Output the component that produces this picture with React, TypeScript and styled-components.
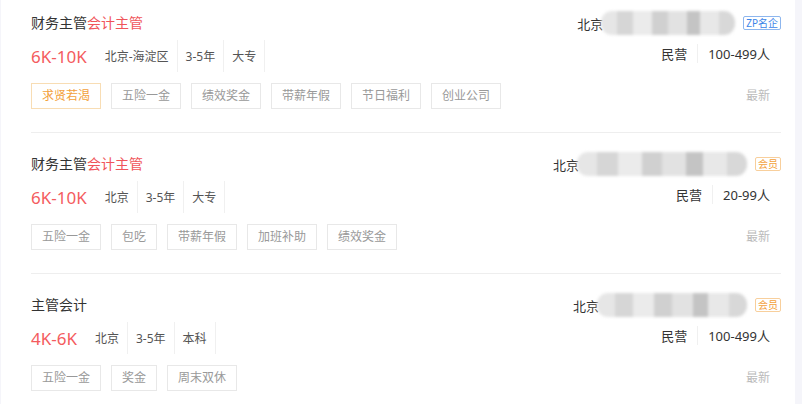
import React from "react";
import styled, { createGlobalStyle } from "styled-components";

const GlobalStyle = createGlobalStyle`
  html, body {
    margin: 0;
    padding: 0;
    background: #f5f5fa;
  }
  body {
    font-family: "Noto Sans", "Noto Sans CJK SC", sans-serif;
    color: #333;
  }
`;

const SPanel = styled.div`
  width: 794px;
  height: 404px;
  margin-left: 1px;
  background: #fff;
  padding: 0 14px 0 30px;
  box-sizing: border-box;
  overflow: hidden;
`;

const SItem = styled.div`
  display: flex;
  justify-content: space-between;
  padding: 22px 0 23px;
  border-bottom: 1px solid #eeeeee;
  &:first-child {
    padding-top: 14px;
  }
`;

const SLeft = styled.div`
  display: flex;
  flex-direction: column;
`;

const STitle = styled.div`
  font-size: 14px;
  line-height: 18px;
  color: #333;
  & em {
    font-style: normal;
    color: #f0555a;
  }
`;

const SInfoRow = styled.div`
  display: flex;
  align-items: center;
  height: 32px;
  margin-top: 8px;
`;

const SSalary = styled.span`
  font-size: 17px;
  color: #f45b5e;
  margin-right: 10px;
`;

const SInfo = styled.span`
  display: flex;
  align-items: center;
  height: 32px;
  padding: 0 8px;
  font-size: 12px;
  color: #555;
  border-right: 1px solid #f0f0f0;
`;

const STags = styled.div`
  display: flex;
  gap: 10px;
  margin-top: 11px;
`;

const STag = styled.span<{ $hot?: boolean }>`
  height: 24px;
  line-height: 24px;
  padding: 0 10px;
  font-size: 12px;
  color: ${(p) => (p.$hot ? "#f3a13c" : "#999")};
  border: 1px solid ${(p) => (p.$hot ? "#f8ddb4" : "#e8e8e8")};
`;

const SRight = styled.div`
  display: flex;
  flex-direction: column;
  align-items: flex-end;
`;

const SCompany = styled.div`
  display: flex;
  align-items: center;
  height: 18px;
  font-size: 13px;
  color: #333;
`;

const SBlur = styled.span<{ $w: number }>`
  display: inline-block;
  width: ${(p) => p.$w}px;
  height: 24px;
  margin-left: -2px;
  border-radius: 11px;
  filter: blur(1.5px);
  background: linear-gradient(
    90deg,
    #e6e6e6 0 12%,
    #d6d6d6 12% 24%,
    #ebebeb 24% 38%,
    #d0d0d0 38% 50%,
    #e2e2e2 50% 64%,
    #c4c4c4 64% 74%,
    #e8e8e8 74% 88%,
    #d8d8d8 88% 100%
  );
`;

const SBadge = styled.span<{ $blue?: boolean }>`
  margin-left: 8px;
  height: 12px;
  line-height: 12px;
  padding: 0 2px;
  font-size: 10px;
  border-radius: 2px;
  color: ${(p) => (p.$blue ? "#3d86e8" : "#f3a13c")};
  border: 1px solid ${(p) => (p.$blue ? "#8db6ee" : "#f8cf9c")};
`;

const SProps = styled.div`
  display: flex;
  align-items: center;
  margin-top: 11px;
  padding-right: 11px;
  height: 20px;
  font-size: 13px;
  color: #333;
`;

const SProp = styled.span`
  padding: 0 10px;
  & + & {
    border-left: 1px solid #f0f0f0;
  }
  &:last-child {
    padding-right: 0;
  }
`;

const SNew = styled.div`
  margin-top: 20px;
  padding-right: 11px;
  height: 26px;
  line-height: 26px;
  font-size: 12px;
  color: #bbb;
`;

type Job = {
  title: string;
  hl?: string;
  salary: string;
  info: string[];
  tags: string[];
  hot?: string;
  blur: number;
  badge: string;
  blue?: boolean;
  kind: string;
  size: string;
};

const JOBS: Job[] = [
  {
    title: "财务主管",
    hl: "会计主管",
    salary: "6K-10K",
    info: ["北京-海淀区", "3-5年", "大专"],
    hot: "求贤若渴",
    tags: ["五险一金", "绩效奖金", "带薪年假", "节日福利", "创业公司"],
    blur: 134,
    badge: "ZP名企",
    blue: true,
    kind: "民营",
    size: "100-499人",
  },
  {
    title: "财务主管",
    hl: "会计主管",
    salary: "6K-10K",
    info: ["北京", "3-5年", "大专"],
    tags: ["五险一金", "包吃", "带薪年假", "加班补助", "绩效奖金"],
    blur: 170,
    badge: "会员",
    kind: "民营",
    size: "20-99人",
  },
  {
    title: "主管会计",
    salary: "4K-6K",
    info: ["北京", "3-5年", "本科"],
    tags: ["五险一金", "奖金", "周末双休"],
    blur: 150,
    badge: "会员",
    kind: "民营",
    size: "100-499人",
  },
];

const App = () => (
  <>
    <GlobalStyle />
    <SPanel>
      {JOBS.map((job, i) => (
        <SItem key={i}>
          <SLeft>
            <STitle>
              {job.title}
              {job.hl && <em>{job.hl}</em>}
            </STitle>
            <SInfoRow>
              <SSalary>{job.salary}</SSalary>
              {job.info.map((t) => (
                <SInfo key={t}>{t}</SInfo>
              ))}
            </SInfoRow>
            <STags>
              {job.hot && <STag $hot>{job.hot}</STag>}
              {job.tags.map((t) => (
                <STag key={t}>{t}</STag>
              ))}
            </STags>
          </SLeft>
          <SRight>
            <SCompany>
              北京
              <SBlur $w={job.blur} />
              <SBadge $blue={job.blue}>{job.badge}</SBadge>
            </SCompany>
            <SProps>
              <SProp>{job.kind}</SProp>
              <SProp>{job.size}</SProp>
            </SProps>
            <SNew>最新</SNew>
          </SRight>
        </SItem>
      ))}
    </SPanel>
  </>
);

export default App;
